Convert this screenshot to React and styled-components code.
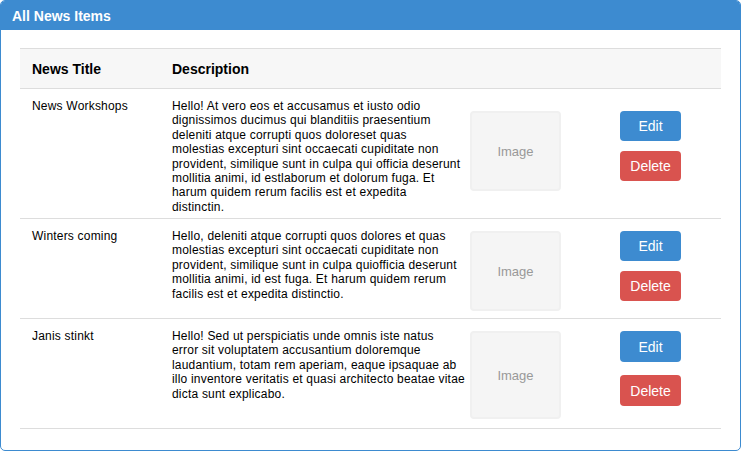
import React from 'react';
import styled, { createGlobalStyle } from 'styled-components';

const GlobalStyle = createGlobalStyle`
  html, body {
    margin: 0;
    padding: 0;
    background: #fff;
  }
  body {
    font-family: "Liberation Sans", Arial, sans-serif;
    color: #000;
  }
`;

const Panel = styled.div`
  box-sizing: border-box;
  width: 741px;
  height: 451px;
  border: 1px solid #3d8bd0;
  border-radius: 5px;
  overflow: hidden;
  display: flex;
  flex-direction: column;
`;

const PanelHeader = styled.div`
  height: 29px;
  background: #3d8bd0;
  color: #fff;
  font-weight: bold;
  font-size: 14px;
  display: flex;
  align-items: center;
  padding-left: 11px;
`;

const PanelBody = styled.div`
  padding: 18px 19px 0 19px;
`;

const Table = styled.div`
  border-top: 1px solid #dddddd;
`;

const Row = styled.div`
  display: grid;
  grid-template-columns: 140px 302px 148px 1fr;
  height: ${(p) => p.$height}px;
  border-bottom: 1px solid #dddddd;
  box-sizing: border-box;
`;

const HeadRow = styled(Row)`
  background: #f7f7f7;
  align-items: center;
  font-weight: bold;
  font-size: 14px;
`;

const HeadCell = styled.div`
  padding-left: 12px;
`;

const TextCell = styled.div`
  padding: 10px 0 0 12px;
  font-size: 12px;
  letter-spacing: 0.2px;
  line-height: 14.4px;
`;

const Line = styled.div`
  white-space: nowrap;
`;

const MediaCell = styled.div`
  padding: ${(p) => p.$top}px 0 0 8px;
`;

const ImageBox = styled.div`
  box-sizing: border-box;
  width: 91px;
  height: ${(p) => p.$height}px;
  background: #f5f5f5;
  border: 2px solid #f0f0f0;
  border-radius: 4px;
  color: #999;
  font-size: 13px;
  display: flex;
  align-items: center;
  justify-content: center;
`;

const Actions = styled.div`
  padding: ${(p) => p.$top}px 0 0 10px;
  display: flex;
  flex-direction: column;
  gap: ${(p) => p.$gap}px;
`;

const Button = styled.button`
  width: 61px;
  height: ${(p) => p.$h}px;
  border: none;
  border-radius: 4px;
  color: #fff;
  font-family: "Liberation Sans", Arial, sans-serif;
  font-size: 14px;
  padding: 0;
  background: ${(p) => (p.$danger ? '#d9534f' : '#3d8bd0')};
  cursor: pointer;
`;

const items = [
  {
    title: 'News Workshops',
    lines: [
      'Hello! At vero eos et accusamus et iusto odio',
      'dignissimos ducimus qui blanditiis praesentium',
      'deleniti atque corrupti quos doloreset quas',
      'molestias excepturi sint occaecati cupiditate non',
      'provident, similique sunt in culpa qui officia deserunt',
      'mollitia animi, id estlaborum et dolorum fuga. Et',
      'harum quidem rerum facilis est et expedita',
      'distinctin.',
    ],
    height: 130,
    top: 22,
    img: 80,
    gap: 10,
    btn: 30,
  },
  {
    title: 'Winters coming',
    lines: [
      'Hello, deleniti atque corrupti quos dolores et quas',
      'molestias excepturi sint occaecati cupiditate non',
      'provident, similique sunt in culpa quiofficia deserunt',
      'mollitia animi, id est fuga. Et harum quidem rerum',
      'facilis est et expedita distinctio.',
    ],
    height: 100,
    top: 12,
    img: 80,
    gap: 10,
    btn: 30,
  },
  {
    title: 'Janis stinkt',
    lines: [
      'Hello! Sed ut perspiciatis unde omnis iste natus',
      'error sit voluptatem accusantium doloremque',
      'laudantium, totam rem aperiam, eaque ipsaquae ab',
      'illo inventore veritatis et quasi architecto beatae vitae',
      'dicta sunt explicabo.',
    ],
    height: 110,
    top: 12,
    img: 88,
    gap: 13,
    btn: 31,
  },
];

const App = () => {
  return (
    <>
      <GlobalStyle />
      <Panel>
        <PanelHeader>All News Items</PanelHeader>
        <PanelBody>
          <Table>
            <HeadRow $height={40}>
              <HeadCell>News Title</HeadCell>
              <HeadCell>Description</HeadCell>
              <div />
              <div />
            </HeadRow>
            {items.map((item) => (
              <Row key={item.title} $height={item.height}>
                <TextCell>{item.title}</TextCell>
                <TextCell>
                  {item.lines.map((line, i) => (
                    <Line key={i}>{line}</Line>
                  ))}
                </TextCell>
                <MediaCell $top={item.top}>
                  <ImageBox $height={item.img}>Image</ImageBox>
                </MediaCell>
                <Actions $top={item.top} $gap={item.gap}>
                  <Button $h={item.btn}>Edit</Button>
                  <Button $h={item.btn} $danger>Delete</Button>
                </Actions>
              </Row>
            ))}
          </Table>
        </PanelBody>
      </Panel>
    </>
  );
};

export default App;
